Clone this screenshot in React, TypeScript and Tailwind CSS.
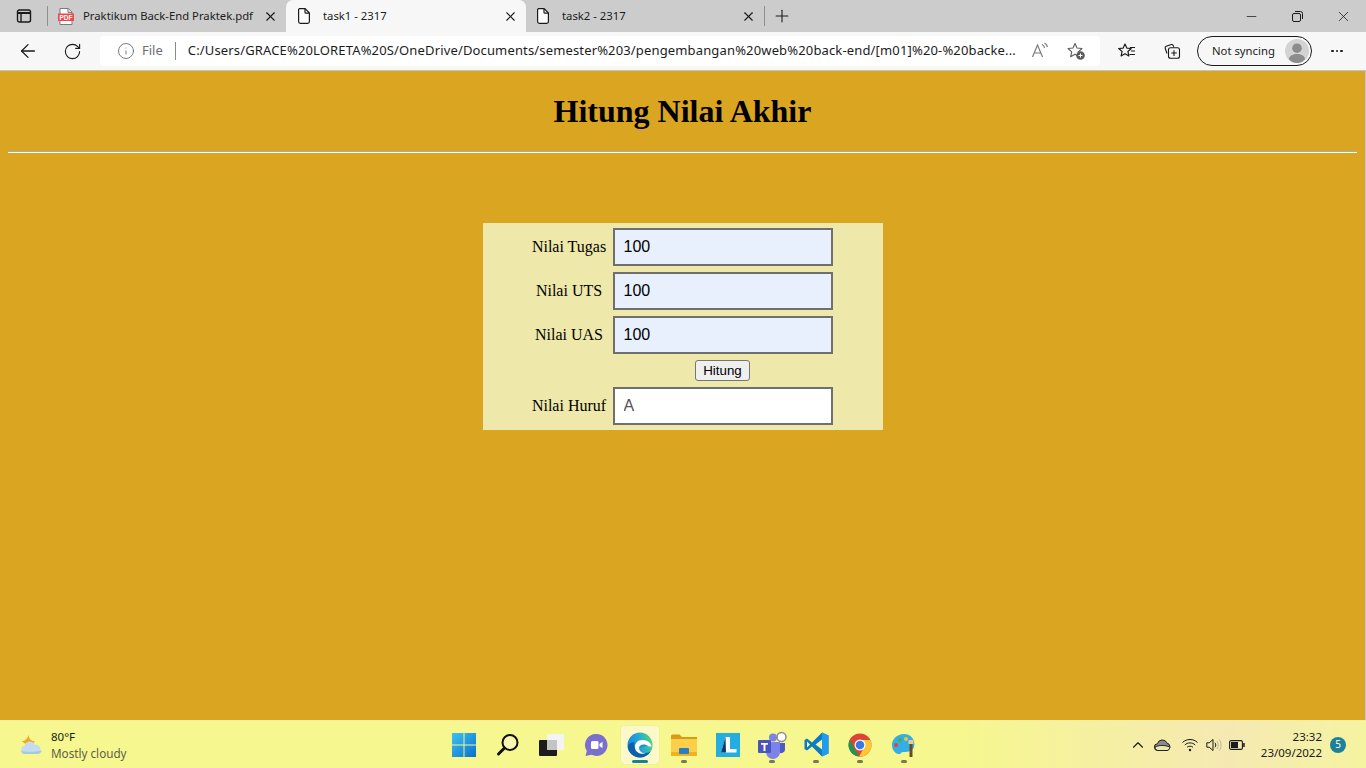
import { ArrowLeft, ChevronUp, Info, Minus, Plus, RotateCw, X } from "lucide-react"

const sysFont = "font-['Noto_Sans','Open_Sans',sans-serif]"

function SidebarIcon() {
  return (
    <svg width="16" height="16" viewBox="0 0 16 16" fill="none" stroke="#1a1a1a" strokeWidth="1.4">
      <rect x="1.500" y="2" width="13" height="12" rx="2" />
      <path d="M2 5h12" strokeWidth="2" />
      <path d="M5 5v9" />
    </svg>
  )
}

function PdfIcon() {
  return (
    <svg width="16" height="17" viewBox="0 0 16 17">
      <path d="M2 .5h8.500L14 4v12.500H2z" fill="#fff" stroke="#7a7a7a" />
      <path d="M10 .5V4.500h4" fill="#e4e4e4" stroke="#7a7a7a" />
      <rect x="0" y="5.500" width="16" height="7.500" fill="#f0474b" />
      <text
        x="8"
        y="11.500"
        textAnchor="middle"
        fontSize="6.500"
        fontWeight="700"
        fontFamily="Liberation Sans, sans-serif"
        fill="#fff"
      >
        PDF
      </text>
    </svg>
  )
}

function DocIcon() {
  return (
    <svg width="12" height="16" viewBox="0 0 12 16" fill="#fff" stroke="#1a1a1a" strokeWidth="1.2">
      <path d="M1.500.6h5.600l4.300 4.400v8.600a1.800 1.800 0 0 1-1.800 1.800H2.400a1.800 1.800 0 0 1-1.800-1.800V1.500z" />
      <path d="M7 .8v3.400c0 .6.4 1 1 1h3.200" fill="none" />
    </svg>
  )
}

function Tab({
  title,
  icon,
  active,
  width,
  pl,
}: {
  title: string
  icon: React.ReactNode
  active?: boolean
  width: string
  pl: string
}) {
  return (
    <div
      className={`flex h-[32px] items-center ${width} ${pl} ${
        active ? "rounded-t-[7px] bg-[#f7f7f7]" : ""
      }`}
    >
      <div className="flex w-[25px] shrink-0 items-center">{icon}</div>
      <span className="flex-1 truncate text-[11.300px] text-[#1c1c1c]">{title}</span>
      <X size={15} strokeWidth={1.7} className="mr-[8px] text-[#1a1a1a]" />
    </div>
  )
}

function ReadAloud() {
  return (
    <svg width="18" height="18" viewBox="0 0 18 18" fill="none" stroke="#7a7a7a" strokeWidth="1.200">
      <path d="M1.500 15 6.500 3l5 12M3.300 11h6.400" />
      <path d="M11 2.500c1.400.6 2.300 1.800 2.600 3.300M13.500 1c1.700.9 2.600 2.300 3 4" />
    </svg>
  )
}

function StarAdd() {
  return (
    <svg width="20" height="20" viewBox="0 0 20 20" fill="none">
      <path
        d="M9 2.500l2 4.500 5 .5-3.700 3.300 1 4.900L9 13.200l-4.300 2.500 1-4.900L2 7.500l5-.5z"
        stroke="#5c5c5c"
        strokeWidth="1.100"
        strokeLinejoin="round"
      />
      <circle cx="14.500" cy="14.500" r="4.300" fill="#5c5c5c" />
      <path d="M14.500 12.500v4M12.500 14.500h4" stroke="#fff" strokeWidth="1" />
    </svg>
  )
}

function Favorites() {
  return (
    <svg width="20" height="20" viewBox="0 0 20 20" fill="none" stroke="#1a1a1a" strokeWidth="1.150" strokeLinejoin="round">
      <path d="M8 3l1.800 4.100 4.500.4-3.400 3 1 4.400L8 12.700l-3.900 2.200 1-4.400-3.400-3 4.500-.4z" />
      <path d="M13 6.500h5M14 10h4M12.500 13.500H18" />
    </svg>
  )
}

function Collections() {
  return (
    <svg width="20" height="20" viewBox="0 0 20 20" fill="none" stroke="#1a1a1a" strokeWidth="1.100">
      <path d="M5 12.500 3.200 7.200c-.3-.9.2-1.700 1-2l5-1.600c.9-.3 1.600 0 2 .9l.5 1.400" />
      <rect x="6.500" y="6.800" width="11" height="10.500" rx="2" />
      <path d="M12 9.200v5.700M9.200 12h5.600" />
    </svg>
  )
}

function Avatar() {
  return (
    <svg width="24" height="24" viewBox="0 0 24 24">
      <circle cx="12" cy="12" r="12" fill="#d3d3d3" />
      <circle cx="12" cy="9.200" r="4.800" fill="#8c8c8c" />
      <path d="M3.800 20c1-3.600 4.200-5 8.200-5s7.200 1.400 8.200 5c-2 2.500-5 4-8.200 4s-6.200-1.500-8.200-4z" fill="#8c8c8c" />
    </svg>
  )
}

function WeatherIcon() {
  return (
    <svg width="24" height="24" viewBox="0 0 24 24">
      <path d="M10 1.500c-.6 3.500 1.500 6.500 6 7-2 3.500-6.500 4.500-9.500 2.500C4.500 9.800 3.500 8.500 2.500 8c3.500.5 6-2.500 7.500-6.500z" fill="#f5a623" />
      <path d="M6 21a4 4 0 0 1-.6-7.900 5.500 5.500 0 0 1 10.500-1.300A4.800 4.800 0 0 1 18.500 21z" fill="#c5dcee" />
      <path d="M6 21a4 4 0 0 1-3.900-3.300c5 1.500 13 1.500 20.500-.3A4.800 4.800 0 0 1 18.500 21z" fill="#a7c8e2" />
    </svg>
  )
}

function WindowsLogo() {
  return (
    <svg width="24" height="24" viewBox="0 0 24 24">
      <defs>
        <linearGradient id="win" x1="0" y1="0" x2="1" y2="1">
          <stop offset="0" stopColor="#3cc3f4" />
          <stop offset="1" stopColor="#0a6fc9" />
        </linearGradient>
      </defs>
      <path d="M0 0h11.500v11.500H0zM12.500 0H24v11.500H12.500zM0 12.500h11.500V24H0zM12.500 12.500H24V24H12.500z" fill="url(#win)" />
    </svg>
  )
}

function SearchLogo() {
  return (
    <svg width="24" height="24" viewBox="0 0 24 24" fill="none" stroke="#111" strokeWidth="2">
      <circle cx="14" cy="9.500" r="7.500" fill="#f8f8b0" />
      <path d="M8.500 15 2.500 21" strokeWidth="3" strokeLinecap="round" />
    </svg>
  )
}

function TaskViewLogo() {
  return (
    <svg width="26" height="24" viewBox="0 0 26 24">
      <rect x="8" y="1" width="17" height="16" rx="1" fill="#f4f4f4" />
      <rect x="0" y="7" width="18" height="16" rx="1" fill="#1c1c1c" />
      <rect x="8" y="7" width="10" height="10" fill="#c4c4c4" />
    </svg>
  )
}

function ChatLogo() {
  return (
    <svg width="24" height="24" viewBox="0 0 24 24">
      <path d="M12.500 1a11 11 0 1 1-5 20.800L1.500 23l1.300-5A11 11 0 0 1 12.500 1z" fill="#7a6fce" />
      <rect x="7" y="8" width="7.500" height="8" rx="1.500" fill="#fff" />
      <path d="M15.500 11l3-2.200v6.400l-3-2.200z" fill="#fff" />
    </svg>
  )
}

function EdgeLogo() {
  return (
    <svg width="26" height="26" viewBox="0 0 26 26">
      <defs>
        <linearGradient id="edgeG" x1="0" y1="0.500" x2="1" y2="0.200">
          <stop offset="0" stopColor="#1587d4" />
          <stop offset="0.500" stopColor="#25a8d6" />
          <stop offset="1" stopColor="#56d86f" />
        </linearGradient>
      </defs>
      <circle cx="13" cy="13" r="12.500" fill="url(#edgeG)" />
      <path d="M.7 15c1 6 6 10.500 12.300 10.500 4 0 8-2 10.500-6-3 1.800-7 2.300-10.500 1C9 19 6 15 7.500 10 4 10.500 1.500 12 .7 15z" fill="#0b5fab" />
      <path d="M24.500 14.500c0-3.500-4-6.500-9-6.500-5 0-8 3.500-7.500 8 .6 4.500 5.500 6.500 10.500 5.500-3.500-.2-6.500-2.500-6.500-5.500 0-2 2-3 4-3 3 0 3.500 1.500 8.500 1.500z" fill="#fff" />
      <path d="M12.500 16c0-2.200 1.800-3.400 3.800-3.400 1.500 0 3 .5 5.200 1-3 .8-6 .8-9 2.400z" fill="#1f8ad6" />
    </svg>
  )
}

function FolderLogo() {
  return (
    <svg width="26" height="24" viewBox="0 0 26 24">
      <path d="M0 3a1.500 1.500 0 0 1 1.500-1.500h7L11 4h15v4H0z" fill="#d99a14" />
      <path d="M0 6h26v16a1 1 0 0 1-1 1H1a1 1 0 0 1-1-1z" fill="#fbcf49" />
      <path d="M0 19h26v3a1 1 0 0 1-1 1H1a1 1 0 0 1-1-1z" fill="#f2b21f" />
      <rect x="8" y="15" width="10" height="6" rx="1" fill="#2a7fc4" />
    </svg>
  )
}

function LLogo() {
  return (
    <svg width="24" height="24" viewBox="0 0 24 24">
      <rect width="24" height="24" fill="#22aee0" />
      <path d="M9.500 4h4.500v12h6.500v3.500H5z" fill="#fff" />
      <path d="M9.500 4 5 19.500h5z" fill="#10386b" />
    </svg>
  )
}

function TeamsLogo() {
  return (
    <svg width="30" height="28" viewBox="0 0 30 28">
      <circle cx="16" cy="6.500" r="4" fill="#7b83eb" />
      <path d="M9 11h14v10a7 7 0 0 1-14 0z" fill="#7b83eb" />
      <path d="M23 12h5v7a4 4 0 0 1-5 3z" fill="#5059c9" />
      <circle cx="24.500" cy="6" r="4.500" fill="#fff" stroke="#8c8c8c" strokeWidth="1.500" />
      <rect x="1" y="9" width="13" height="13" rx="1" fill="#4b53bc" />
      <path d="M4 12h7v1.800H8.500V20h-2v-6.200H4z" fill="#fff" />
    </svg>
  )
}

function VsCodeLogo() {
  return (
    <svg width="25" height="25" viewBox="0 0 25 25">
      <path d="M18 .5 24.500 3.500v18L18 24.500 8 14.500 3 18.500 .5 17v-9L3 6.500l5 4z" fill="#0a7bc4" />
      <path d="M18 .5 24.500 3.500v18L18 24.500z" fill="#1f9cf0" />
      <path d="M18 7.500v10l-6.500-5z" fill="#f8f8a0" />
      <path d="M3 9.500v6l3-3z" fill="#f8f8a0" />
    </svg>
  )
}

function ChromeLogo() {
  return (
    <svg width="24" height="24" viewBox="0 0 24 24">
      <circle cx="12" cy="12" r="11.500" fill="#db4437" />
      <path d="M1.800 6.800 7 17.500l5 6A11.500 11.500 0 0 1 1.800 6.800z" fill="#0f9d58" />
      <path d="M12 7h10.300A11.500 11.500 0 0 1 11 23.500L16.500 14z" fill="#fcc934" />
      <circle cx="12" cy="12" r="5.500" fill="#fff" />
      <circle cx="12" cy="12" r="4.300" fill="#3b78e7" />
    </svg>
  )
}

function PaletteLogo() {
  return (
    <svg width="24" height="24" viewBox="0 0 24 24">
      <path d="M12 1C5 1 0 6 0 12c0 5 3 8 6 9 3 .8 3-2 5-2 3 0 9 0 11-5C24 7 19 1 12 1z" fill="#35aee6" />
      <circle cx="4" cy="12" r="2" fill="#e0492f" />
      <circle cx="8" cy="7" r="2" fill="#3fb24a" />
      <circle cx="14" cy="6" r="2" fill="#f4c430" />
      <rect x="17.500" y="10" width="3" height="14" fill="#6b4a22" />
      <rect x="16.500" y="7" width="5" height="4" fill="#e4c99a" />
    </svg>
  )
}

function CloudIcon() {
  return (
    <svg width="17" height="12" viewBox="0 0 17 12">
      <path d="M4 11.500a3.400 3.400 0 0 1-.5-6.800 5 5 0 0 1 9.500-.6 3.800 3.800 0 0 1 0 7.400z" fill="#8a8a8a" stroke="#222" strokeWidth="1" />
      <path d="M1 8c4-2 10-2 15 0-.5 2-1.500 3.500-3 3.500H4C2.500 11.500 1.300 10 1 8z" fill="#efe9b0" stroke="#222" strokeWidth="1" />
    </svg>
  )
}

function WifiIcon() {
  return (
    <svg width="16" height="14" viewBox="0 0 16 14" fill="none" stroke="#1a1a1a" strokeWidth="1">
      <path d="M.5 4.500c4-4 11-4 15 0M2.800 7c2.800-2.800 7.600-2.800 10.400 0M5 9.300c1.600-1.500 4.400-1.500 6 0" />
      <circle cx="8" cy="12" r="1.200" fill="#1a1a1a" stroke="none" />
    </svg>
  )
}

function VolumeIcon() {
  return (
    <svg width="16" height="14" viewBox="0 0 16 14" fill="none" stroke="#1a1a1a" strokeWidth="1">
      <path d="M.8 4.800h2.400L7 1.500v11L3.200 9.200H.8z" strokeLinejoin="round" />
      <path d="M9 4.800c1 1.300 1 3.200 0 4.500" />
      <path d="M11 3c1.700 2.300 1.700 5.700 0 8M13.300 1.500c2.300 3.200 2.300 7.800 0 11" stroke="#b8b8a0" />
    </svg>
  )
}

function BatteryIcon() {
  return (
    <svg width="16" height="10" viewBox="0 0 16 10" fill="none">
      <rect x=".6" y=".6" width="12.800" height="8.800" rx="1.500" stroke="#1a1a1a" strokeWidth="1.100" />
      <rect x="2" y="2" width="7" height="6" fill="#1a1a1a" />
      <rect x="14.200" y="3" width="1.500" height="4" fill="#1a1a1a" />
    </svg>
  )
}

const taskbarApps = [
  { key: "start", icon: <WindowsLogo /> },
  { key: "search", icon: <SearchLogo /> },
  { key: "taskview", icon: <TaskViewLogo /> },
  { key: "chat", icon: <ChatLogo /> },
  { key: "edge", icon: <EdgeLogo />, active: true },
  { key: "files", icon: <FolderLogo />, open: true },
  { key: "l", icon: <LLogo /> },
  { key: "teams", icon: <TeamsLogo />, open: true },
  { key: "vscode", icon: <VsCodeLogo />, open: true },
  { key: "chrome", icon: <ChromeLogo />, open: true },
  { key: "paint", icon: <PaletteLogo />, open: true },
]

const fields = [
  { label: "Nilai Tugas", value: "100" },
  { label: "Nilai UTS", value: "100" },
  { label: "Nilai UAS", value: "100" },
]

function BrowserChrome() {
  return (
    <div className={sysFont}>
      <div className="flex h-[32px] items-center bg-[#cccccc]">
        <div className="flex w-[47px] justify-center">
          <SidebarIcon />
        </div>
        <div className="h-[20px] w-px bg-[#8f8f8f]" />
        <Tab title="Praktikum Back-End Praktek.pdf" icon={<PdfIcon />} width="w-[238px]" pl="pl-[10px]" />
        <Tab title="task1 - 2317" icon={<DocIcon />} active width="w-[240px]" pl="pl-[12px]" />
        <Tab title="task2 - 2317" icon={<DocIcon />} width="w-[238px]" pl="pl-[11px]" />
        <div className="h-[20px] w-px bg-[#8f8f8f]" />
        <Plus size={20} strokeWidth={1.3} className="ml-[7px] text-[#1a1a1a]" />
        <div className="ml-auto flex items-center">
          <div className="flex w-[46px] justify-center">
            <Minus size={15} strokeWidth={1.2} className="text-[#1a1a1a]" />
          </div>
          <div className="flex w-[46px] justify-center">
            <svg width="11" height="11" viewBox="0 0 11 11" fill="none" stroke="#1a1a1a" strokeWidth="1">
              <rect x=".5" y="2.500" width="8" height="8" rx="1.500" />
              <path d="M3 .5h5.500a2 2 0 0 1 2 2V8" />
            </svg>
          </div>
          <div className="flex w-[46px] justify-center">
            <X size={17} strokeWidth={1.1} className="text-[#1a1a1a]" />
          </div>
        </div>
      </div>
      <div className="flex h-[39px] items-center border-b border-[#c4c4c4] bg-[#f7f7f7]">
        <div className="flex w-[100px] shrink-0 items-center">
          <div className="flex w-[56px] justify-center">
            <ArrowLeft size={22} strokeWidth={1.4} className="text-[#1a1a1a]" />
          </div>
          <div className="flex w-[32px] justify-center">
            <RotateCw size={19} strokeWidth={1.4} className="text-[#1a1a1a]" />
          </div>
        </div>
        <div className="flex h-[30px] w-[1000px] shrink-0 items-center rounded-[4px] bg-white pl-[17px]">
          <Info size={18} strokeWidth={1.2} className="text-[#6e6e6e]" />
          <span className="ml-[7px] text-[13px] text-[#6e6e6e]">File</span>
          <div className="ml-[12px] h-[18px] w-px bg-[#8a8a8a]" />
          <span className="ml-[12px] w-[830px] truncate text-[13px] tracking-[0.15px] text-[#1c1c1c]">
            C:/Users/GRACE%20LORETA%20S/OneDrive/Documents/semester%203/pengembangan%20web%20back-end/[m01]%20-%20backe...
          </span>
          <div className="ml-auto flex items-center gap-[17px] pr-[14px]">
            <ReadAloud />
            <StarAdd />
          </div>
        </div>
        <div className="ml-[17px] flex w-[20px] justify-center">
          <Favorites />
        </div>
        <div className="ml-[25px] flex w-[20px] justify-center">
          <Collections />
        </div>
        <div className="ml-[15px] flex h-[30px] w-[115px] items-center justify-between rounded-full border border-[#1a1a1a] pl-[14px] pr-[2px]">
          <span className="text-[11.300px] text-[#1c1c1c]">Not syncing</span>
          <Avatar />
        </div>
        <div className="ml-[19px] flex gap-[2px]">
          <span className="size-[2.500px] rounded-full bg-[#1a1a1a]" />
          <span className="size-[2.500px] rounded-full bg-[#1a1a1a]" />
          <span className="size-[2.500px] rounded-full bg-[#1a1a1a]" />
        </div>
      </div>
    </div>
  )
}

function Taskbar() {
  return (
    <div
      className={`flex h-[48px] items-center border-t border-[#eeeeb0] bg-gradient-to-r from-[#f6f78e] from-70% via-[#f5e9b2] via-90% to-[#f5f4a0] ${sysFont}`}
    >
      <div className="flex w-[442px] shrink-0 items-center pl-[19px]">
        <WeatherIcon />
        <div className="ml-[8px] flex flex-col leading-[16px]">
          <span className="text-[11.500px] text-[#1a1a1a]">80°F</span>
          <span className="text-[11.700px] text-[#5f5f4a]">Mostly cloudy</span>
        </div>
      </div>
      <div className="flex w-[484px] shrink-0 items-center">
        {taskbarApps.map((app) => (
          <div
            key={app.key}
            className={`relative flex h-[38px] items-center justify-center rounded-[4px] ${
              app.active ? "mx-[3px] w-[38px] bg-[#fbf9c9] shadow-[0_0_1px_#d8d8a0]" : "w-[44px]"
            }`}
          >
            {app.icon}
            {app.active && (
              <span className="absolute bottom-[1px] left-[11px] h-[3px] w-[16px] rounded-full bg-[#1b7f99]" />
            )}
            {app.open && (
              <span className="absolute bottom-[1px] left-[19px] h-[3px] w-[6px] rounded-full bg-[#77775a]" />
            )}
          </div>
        ))}
      </div>
      <div className="flex flex-1 items-center pl-[203px] text-[#1a1a1a]">
        <ChevronUp size={18} strokeWidth={1.5} />
        <div className="ml-[7px]">
          <CloudIcon />
        </div>
        <div className="ml-[11px]">
          <WifiIcon />
        </div>
        <div className="ml-[8px]">
          <VolumeIcon />
        </div>
        <div className="ml-[7px]">
          <BatteryIcon />
        </div>
        <div className="ml-[15px] flex w-[62px] flex-col items-end text-[11.500px] leading-[16px] text-[#1a1a1a]">
          <span>23:32</span>
          <span>23/09/2022</span>
        </div>
        <div className="ml-[8px] flex size-[16px] items-center justify-center rounded-full bg-[#1f8199] text-[10px] text-white">
          5
        </div>
      </div>
    </div>
  )
}

export default function App() {
  return (
    <div className="flex h-[768px] w-[1366px] flex-col overflow-hidden">
      <BrowserChrome />
      <div className="flex flex-1 flex-col border-r border-[#c8c8c8] bg-[#daa520] pl-[8px] pr-[8px] font-['Liberation_Serif',serif] text-black">
        <h1 className="mt-[22px] text-center text-[32px] leading-[37px] font-bold">Hitung Nilai Akhir</h1>
        <hr className="mt-[21px] h-[2px] border-0 border-t border-t-[#a9a9a9] bg-white" />
        <div className="mx-auto mt-[70px] flex w-[400px] flex-col gap-[6px] bg-[#eee8aa] py-[5px] pl-[47px]">
          {fields.map((field) => (
            <div key={field.label} className="flex items-center gap-[4px]">
              <label className="w-[79px] text-center text-[16px]">{field.label}</label>
              <input
                readOnly
                defaultValue={field.value}
                className="h-[38px] w-[220px] border-2 border-[#6f6f6f] bg-[#e8f0fe] pl-[9px] font-['Liberation_Sans',sans-serif] text-[16px] text-black outline-none"
              />
            </div>
          ))}
          <div className="flex pl-[83px]">
            <div className="flex w-[219px] justify-center">
              <button className="h-[21px] w-[55px] rounded-[3px] border border-[#767676] bg-[#efefef] pl-[1px] font-['Liberation_Sans',sans-serif] text-[13.330px] text-black">
                Hitung
              </button>
            </div>
          </div>
          <div className="flex items-center gap-[4px]">
            <label className="w-[79px] text-center text-[16px]">Nilai Huruf</label>
            <input
              readOnly
              defaultValue="A"
              className="h-[38px] w-[220px] border-2 border-[#6f6f6f] bg-white pl-[9px] font-['Liberation_Sans',sans-serif] text-[16px] text-[#545454] outline-none"
            />
          </div>
        </div>
      </div>
      <Taskbar />
    </div>
  )
}
